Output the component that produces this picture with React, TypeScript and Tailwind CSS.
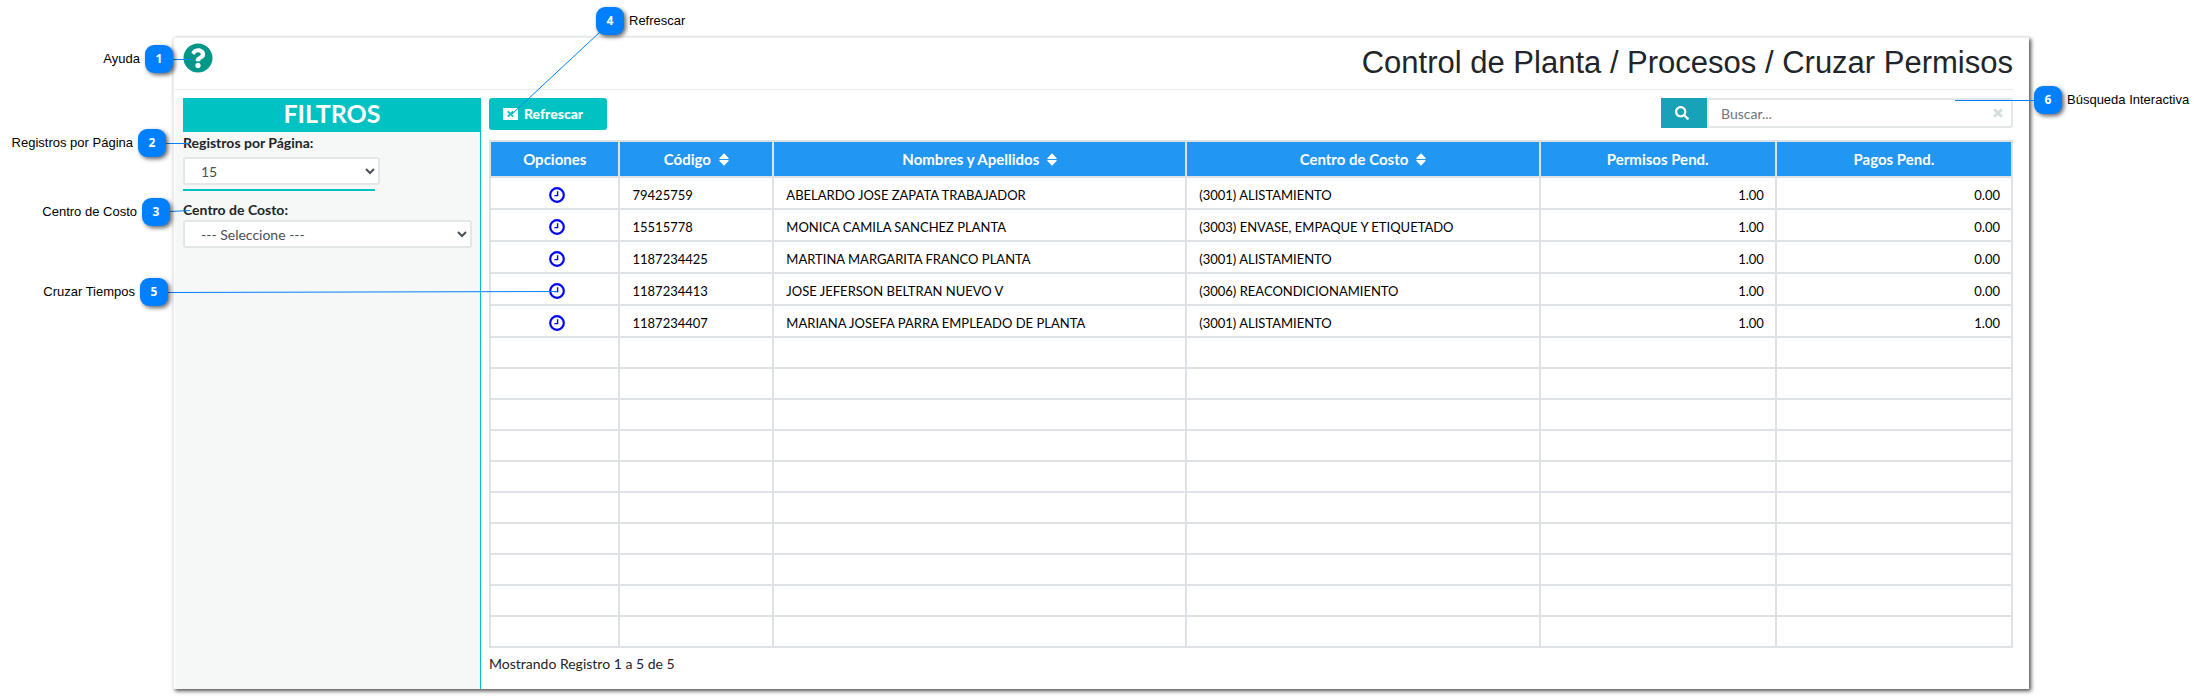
import { FaQuestionCircle, FaSearch } from "react-icons/fa";

type Row = { code: string; name: string; center: string; pending: string; payments: string };

const rows: Row[] = [
  { code: "79425759", name: "ABELARDO JOSE ZAPATA TRABAJADOR", center: "(3001) ALISTAMIENTO", pending: "1.00", payments: "0.00" },
  { code: "15515778", name: "MONICA CAMILA SANCHEZ PLANTA", center: "(3003) ENVASE, EMPAQUE Y ETIQUETADO", pending: "1.00", payments: "0.00" },
  { code: "1187234425", name: "MARTINA MARGARITA FRANCO PLANTA", center: "(3001) ALISTAMIENTO", pending: "1.00", payments: "0.00" },
  { code: "1187234413", name: "JOSE JEFERSON BELTRAN NUEVO V", center: "(3006) REACONDICIONAMIENTO", pending: "1.00", payments: "0.00" },
  { code: "1187234407", name: "MARIANA JOSEFA PARRA EMPLEADO DE PLANTA", center: "(3001) ALISTAMIENTO", pending: "1.00", payments: "1.00" },
];

const columns = [
  { label: "Opciones", sortable: false, width: "w-[8.5%]" },
  { label: "Código", sortable: true, width: "w-[10.1%]" },
  { label: "Nombres y Apellidos", sortable: true, width: "w-[27.1%]" },
  { label: "Centro de Costo", sortable: true, width: "w-[23.2%]" },
  { label: "Permisos Pend.", sortable: false, width: "w-[15.5%]" },
  { label: "Pagos Pend.", sortable: false, width: "w-[15.5%]" },
];

const callouts = [
  { n: 1, label: "Ayuda", side: "left", place: "left-0 w-[173px] top-[45px]" },
  { n: 2, label: "Registros por Página", side: "left", place: "left-0 w-[166px] top-[129px]" },
  { n: 3, label: "Centro de Costo", side: "left", place: "left-0 w-[170px] top-[198px]" },
  { n: 5, label: "Cruzar Tiempos", side: "left", place: "left-0 w-[168px] top-[278px]" },
  { n: 4, label: "Refrescar", side: "right", place: "left-[596px] top-[7px]" },
  { n: 6, label: "Búsqueda Interactiva", side: "right", place: "right-0 w-[169px] top-[86px]" },
];

function ClockIcon() {
  return (
    <svg viewBox="0 0 16 16" className="h-4 w-4" fill="none" stroke="currentColor" aria-hidden="true">
      <circle cx="8" cy="8" r="6.8" strokeWidth="2.2" />
      <path d="M8.6 4.2V8.6H5.4" strokeWidth="1.4" />
    </svg>
  );
}

function RefreshIcon() {
  return (
    <svg viewBox="0 0 15 12" className="h-3 w-[15px]" aria-hidden="true">
      <rect width="15" height="12" rx="0.6" fill="#fff" />
      <path d="M4.8 3.4l5.4 5.2M10.2 3.4L4.8 8.6" stroke="#00c2c2" strokeWidth="1.8" />
    </svg>
  );
}

function SortIcon() {
  return (
    <svg viewBox="0 0 10 13" className="h-[13px] w-[10px]" fill="currentColor" aria-hidden="true">
      <path d="M5 0.3L9.6 5a0.6 0.6 0 0 1-0.4 1H0.8a0.6 0.6 0 0 1-0.4-1z" />
      <path d="M5 12.7L9.6 8a0.6 0.6 0 0 0-0.4-1H0.8a0.6 0.6 0 0 0-0.4 1z" />
    </svg>
  );
}

function ClearIcon() {
  return (
    <svg viewBox="0 0 10 10" className="h-[10px] w-[10px]" stroke="currentColor" strokeWidth="3" aria-hidden="true">
      <path d="M1.2 1.2l7.6 7.6M8.8 1.2L1.2 8.8" />
    </svg>
  );
}

function Callouts() {
  return (
    <>
      <svg className="pointer-events-none absolute left-0 top-0 h-[320px] w-[620px]" stroke="#0080ff" fill="none" aria-hidden="true">
        <path d="M173 59.5H192" />
        <path d="M166 143.5H190" />
        <path d="M170 211.5L190 210.5" />
        <path d="M168 292.5L557 291.5" />
        <path d="M600 32L512 114" />
      </svg>
      <div className="absolute right-[169px] top-[100px] h-px w-[79px] bg-[#0080ff]" />
      {callouts.map((c) => (
        <div
          key={c.n}
          className={`absolute flex items-center gap-[5px] text-[13px] leading-7 text-black ${c.side === "left" ? "justify-end" : "flex-row-reverse justify-end"} ${c.place}`}
        >
          <span className="whitespace-nowrap">{c.label}</span>
          <span className="h-7 w-7 shrink-0 rounded-[9px] bg-[#0080ff] text-center font-['Open_Sans',sans-serif] text-xs leading-7 font-bold text-white shadow-[2px_2px_4px_rgba(0,0,0,0.6)]">
            {c.n}
          </span>
        </div>
      ))}
    </>
  );
}

function Sidebar() {
  const select = "block h-7 rounded-[3px] border-2 border-[#e4e7e7] bg-white pl-3 text-sm text-[#495057]";
  return (
    <aside className="w-[306px] shrink-0 border-r border-[#00c2c2] bg-[#f6f8f8] pl-2">
      <h2 className="-mr-px h-[34px] bg-[#00c2c2] text-center text-[25px] leading-[30px] font-bold text-white">FILTROS</h2>
      <label htmlFor="page-size" className="block text-sm leading-[21px] font-bold">
        Registros por Página:
      </label>
      <select id="page-size" className={`${select} mt-1 w-[197px]`}>
        <option>15</option>
      </select>
      <div className="mt-1 h-0.5 w-48 bg-[#00c2c2]" />
      <label htmlFor="cost-center" className="mt-2 block text-sm leading-[21px] font-bold">
        Centro de Costo:
      </label>
      <select id="cost-center" className={`${select} w-[289px]`}>
        <option>--- Seleccione ---</option>
      </select>
    </aside>
  );
}

function PermitsTable() {
  const cell = "border-2 border-[#dee2e6] pt-1.5 pr-[11px] pl-3";
  return (
    <table className="mt-[10px] w-full table-fixed border-collapse text-[13px] text-black">
      <thead>
        <tr className="h-9 bg-[#2196f3] text-[15px] text-white">
          {columns.map((c) => (
            <th key={c.label} scope="col" className={`border-2 border-[#dee2e6] p-0 font-bold ${c.width}`}>
              <span className="inline-flex items-center gap-2">
                {c.label}
                {c.sortable && <SortIcon />}
              </span>
            </th>
          ))}
        </tr>
      </thead>
      <tbody>
        {rows.map((r) => (
          <tr key={r.code} className="h-8">
            <td className="border-2 border-[#dee2e6] px-3 pt-1 text-center">
              <button type="button" aria-label="Cruzar tiempos" className="flex w-full justify-center pl-1 text-[#0000ff]">
                <ClockIcon />
              </button>
            </td>
            <td className={cell}>{r.code}</td>
            <td className={cell}>{r.name}</td>
            <td className={cell}>{r.center}</td>
            <td className={`${cell} text-right`}>{r.pending}</td>
            <td className={`${cell} text-right`}>{r.payments}</td>
          </tr>
        ))}
        {Array.from({ length: 10 }, (_, i) => (
          <tr key={i} className="h-[31px]">
            {columns.map((c) => (
              <td key={c.label} className="border-2 border-[#dee2e6] p-0" />
            ))}
          </tr>
        ))}
      </tbody>
    </table>
  );
}

export default function App() {
  return (
    <div className="relative bg-white pt-[37px] pr-[174px] pb-[9px] pl-[173px] font-['Liberation_Sans',Arial,sans-serif]">
      <div className="border-t border-l border-[#ececec] bg-white pl-px text-[#212529] shadow-[2px_2px_4px_rgba(0,0,0,0.7)]">
        <header className="mr-4 flex h-[52px] items-start justify-between border-b border-[#e9ecec] pl-2">
          <button type="button" aria-label="Ayuda" className="mt-[5px] text-[#009688]">
            <FaQuestionCircle className="h-[30px] w-[30px]" />
          </button>
          <h1 className="mt-[7px] text-[31px] leading-9">Control de Planta / Procesos / Cruzar Permisos</h1>
        </header>
        <div className="mt-2 flex font-['Lato',sans-serif]">
          <Sidebar />
          <main className="min-w-0 grow pr-4 pb-[9px] pl-2">
            <div className="flex h-8 items-start justify-between">
              <button type="button" className="flex h-8 w-[118px] items-center gap-1.5 rounded-[3px] bg-[#00c2c2] pl-[14px] text-sm font-black text-white">
                <RefreshIcon />
                Refrescar
              </button>
              <div className="flex h-[30px] w-[352px]">
                <button type="button" aria-label="Buscar" className="flex w-[46px] items-center bg-[#17a2b8] pl-[14px] text-white">
                  <FaSearch className="h-[14px] w-[14px]" />
                </button>
                <div className="flex min-w-0 grow items-center rounded-r-[3px] border-2 border-[#e4e7e7] pr-2">
                  <input
                    type="text"
                    aria-label="Buscar"
                    placeholder="Buscar..."
                    className="h-full min-w-0 grow px-3 text-sm outline-none placeholder:text-[#6c757d]"
                  />
                  <button type="button" aria-label="Limpiar búsqueda" className="text-[#d5dfdf]">
                    <ClearIcon />
                  </button>
                </div>
              </div>
            </div>
            <PermitsTable />
            <p className="mt-1.5 mb-1.5 text-sm leading-5">Mostrando Registro 1 a 5 de 5</p>
          </main>
        </div>
      </div>
      <Callouts />
    </div>
  );
}
